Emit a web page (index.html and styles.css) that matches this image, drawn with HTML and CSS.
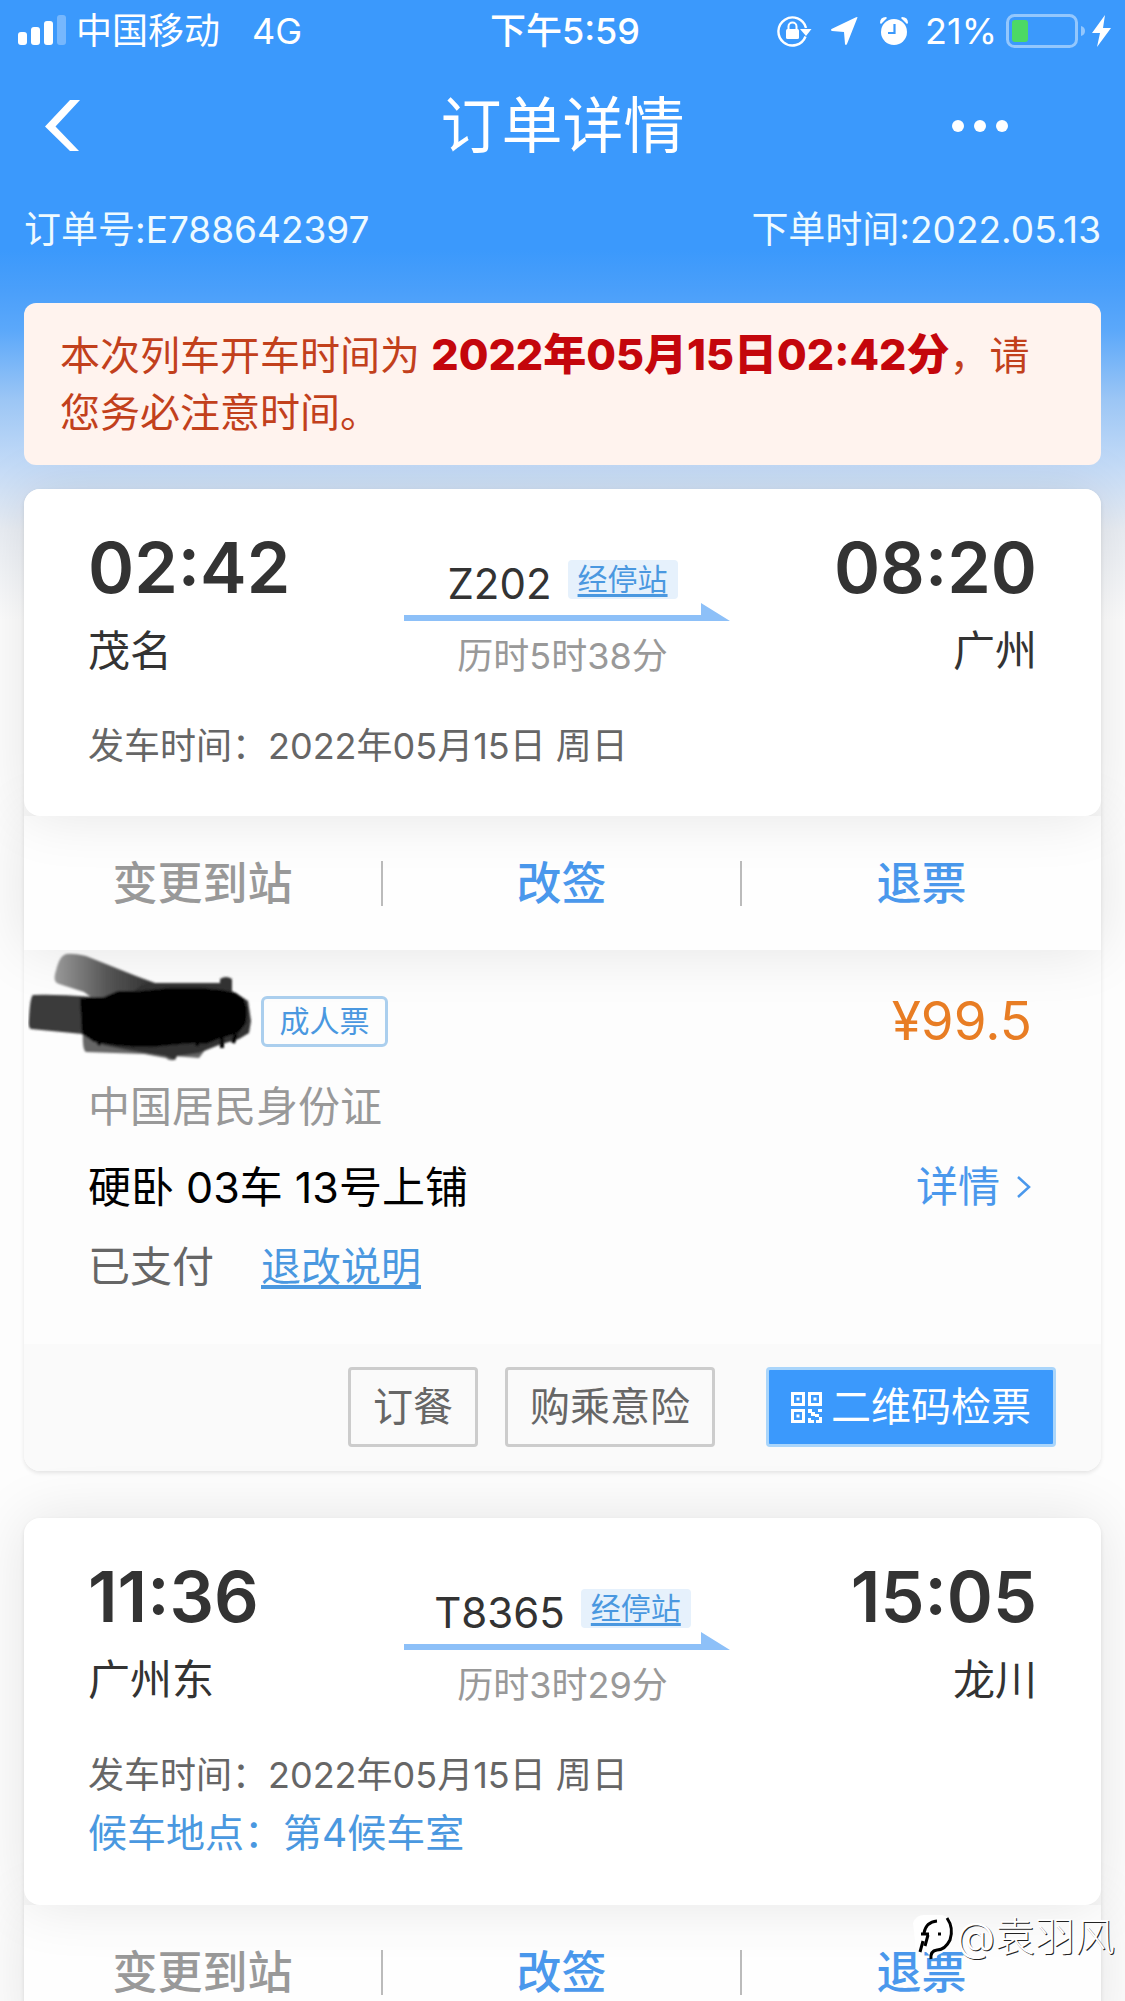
FILE: index.html
```html
<!DOCTYPE html>
<html lang="zh-CN">
<head>
<meta charset="utf-8">
<meta name="viewport" content="width=device-width, initial-scale=1">
<title>订单详情</title>
<link rel="stylesheet" href="styles.css">
</head>
<body>
<div class="app">
  <div class="status">
    <div class="status-side">
      <svg class="signal" width="50" height="34" viewBox="0 0 50 34" fill="#fff" aria-hidden="true"><rect x="0" y="18" width="9" height="13" rx="3"/><rect x="13" y="13" width="9" height="18" rx="3"/><rect x="26" y="7" width="9" height="24" rx="3"/><rect x="39" y="1" width="9" height="30" rx="3" opacity=".3"/></svg>
      <span class="carrier">中国移动</span>
      <span>4G</span>
    </div>
    <div class="status-time">下午5:59</div>
    <div class="status-side status-right">
      <svg width="35" height="32" viewBox="0 0 35 32" aria-hidden="true"><path d="M28.5 21.5A14 14 0 1 1 29 13" fill="none" stroke="#fff" stroke-width="2.4"/><path d="M23 14h11.500l-5.500 7z" fill="#fff"/><rect x="9" y="14" width="13" height="10" rx="1.500" fill="#fff"/><path d="M11.500 15v-3.500a4 4 0 0 1 8 0V15" fill="none" stroke="#fff" stroke-width="2"/></svg>
      <svg class="icon-location" width="29" height="30" viewBox="0 0 29 30" aria-hidden="true"><path d="M27.500 1.500 17 28q-1.200 2-2 0L14 16 2 15q-2-1 0-2.200L25.500 1.500q2-1 2 0z" fill="#fff"/></svg>
      <svg class="icon-alarm" width="30" height="30" viewBox="0 0 30 30" aria-hidden="true"><circle cx="15" cy="16" r="13" fill="#fff"/><path d="M15.500 8v9H9" fill="none" stroke="#3b99fc" stroke-width="2.200"/><path d="M1 7q0-6 6-6l1 1-6 6zM29 7q0-6-6-6l-1 1 6 6z" fill="#fff"/></svg>
      <span class="percent">21%</span>
      <svg class="icon-battery" width="80" height="36" viewBox="0 0 80 36" aria-hidden="true"><rect x="1.500" y="2.500" width="69" height="31" rx="7" fill="none" stroke="#fff" stroke-opacity=".45" stroke-width="3"/><path d="M75 13q4 1 4 5t-4 5z" fill="#fff" fill-opacity=".45"/><rect x="6" y="7" width="16" height="22" rx="3" fill="#4cd964"/></svg>
      <svg class="icon-bolt" width="20" height="32" viewBox="0 0 20 32" aria-hidden="true"><path d="M13 0 0 18h8L5 32 19 13h-8z" fill="#fff"/></svg>
    </div>
  </div>

  <header class="nav">
    <button class="nav-back" aria-label="返回"><svg width="36" height="52" viewBox="0 0 36 52"><path d="M25 0h10L10.500 26.500 34 51H25L0 26.500z" fill="#fff"/></svg></button>
    <h1 class="nav-title">订单详情</h1>
    <button class="nav-more" aria-label="更多"><svg width="58" height="14" viewBox="0 0 58 14" fill="#fff"><circle cx="7" cy="7" r="6"/><circle cx="29" cy="7" r="6"/><circle cx="51" cy="7" r="6"/></svg></button>
  </header>

  <div class="order-meta"><span>订单号:E788642397</span><span>下单时间:2022.05.13</span></div>

  <main class="content">
    <p class="alert">本次列车开车时间为 <strong>2022年05月15日02:42分</strong>，请您务必注意时间。</p>

    <article class="ticket">
      <section class="route">
        <div class="route-grid">
          <div><div class="time">02:42</div><div class="city">茂名</div></div>
          <div class="leg">
            <div class="leg-train"><span class="train-no">Z202</span><a class="stops" href="#stops">经停站</a></div>
            <svg class="leg-arrow" width="334" height="18" viewBox="0 0 334 18" aria-hidden="true"><path d="M8 12h297V0l29 18H8z" fill="#8dc0f8"/></svg>
            <div class="duration">历时5时38分</div>
          </div>
          <div class="arrive"><div class="time">08:20</div><div class="city">广州</div></div>
        </div>
        <div class="depart">发车时间：2022年05月15日 周日</div>
      </section>
      <div class="actions">
        <button class="action" disabled>变更到站</button>
        <button class="action">改签</button>
        <button class="action">退票</button>
      </div>
      <section class="passenger">
        <div class="row row-name">
          <div class="name">
            <svg class="scribble" width="226" height="110" viewBox="28 952 226 110" aria-hidden="true">
              <defs>
                <filter id="soft" x="-5%" y="-5%" width="110%" height="110%"><feGaussianBlur stdDeviation="1"/></filter>
                <linearGradient id="fade" x1="0" x2="1"><stop offset="0" stop-color="#999"/><stop offset=".45" stop-color="#555"/><stop offset="1" stop-color="#222"/></linearGradient>
              </defs>
              <g filter="url(#soft)">
                <path d="M64 955q4-3 22 1l50 20 38 14-10 25-60-8-20-15-25-8q-6-2-4-10 4-17 9-19z" fill="url(#fade)"/>
                <path d="M83 1030h130l-5 16-9 12-25-2 0 4q-5 1-8-2l-22-4-58-2q-4-2-3-22z" fill="#666"/>
                <path d="M135 990q8-8 20-7h65v-4q6-4 12 0v12l16 10 3 20-2 12-10 6-20 6-20 8-22 3-2 4-10-4-38-6-25-5z" fill="#333"/>
                <path d="M33 995q20-1 60 2v38l-62-6q-3-1-2-10 1-22 4-24z" fill="#3b3b3b"/>
                <path d="M80 998 104 997l14-6 22 0 30-3 30 0 22 2 14 3 8 6 3 10-1 14-8 10-20 6-12 5-10-1-14 1-30 3-32-1-26-4-12-8z" fill="#000"/>
                <path d="M92 1040q8-4 12-2l-6 7M125 1040l8 5 8-6M176 1036v9M199 1034l-2 12M222 1030v18M236 1034l-3 9" fill="none" stroke="#000" stroke-width="4"/>
              </g>
            </svg>
          </div>
          <span class="tag">成人票</span>
          <span class="price">¥99.5</span>
        </div>
        <div class="row id-type">中国居民身份证</div>
        <div class="row seat"><span>硬卧 03车 13号上铺</span><a class="detail" href="#detail">详情<svg width="16" height="22" viewBox="0 0 16 22" aria-hidden="true"><path d="m2 1 11 10L2 21" fill="none" stroke="#4a98ec" stroke-width="2.500"/></svg></a></div>
        <div class="row paid"><span>已支付</span><a class="rules" href="#rules">退改说明</a></div>
      </section>
      <footer class="ticket-foot">
        <button class="btn">订餐</button>
        <button class="btn">购乘意险</button>
        <button class="btn btn-primary"><svg width="31" height="31" viewBox="0 0 31 31" fill="#fff" aria-hidden="true"><path fill-rule="evenodd" d="M0 0h14v14H0zM3 3v8h8V3zM17 0h14v14H17zM20 3v8h8V3zM0 17h14v14H0zM3 20v8h8v-8z"/><path d="M5.500 5.500h3v3h-3zM22.500 5.500h3v3h-3zM5.500 22.500h3v3h-3zM17 17h4v3h3v4h-4v-3h-3zM27 17h4v3h-4zM24 22h4v3h3v6h-6v-3h3v-3h-4zM17 26h3v2h3v3h-6z"/></svg>二维码检票</button>
      </footer>
    </article>

    <article class="ticket">
      <section class="route">
        <div class="route-grid">
          <div><div class="time">11:36</div><div class="city">广州东</div></div>
          <div class="leg">
            <div class="leg-train"><span class="train-no">T8365</span><a class="stops" href="#stops">经停站</a></div>
            <svg class="leg-arrow" width="334" height="18" viewBox="0 0 334 18" aria-hidden="true"><path d="M8 12h297V0l29 18H8z" fill="#8dc0f8"/></svg>
            <div class="duration">历时3时29分</div>
          </div>
          <div class="arrive"><div class="time">15:05</div><div class="city">龙川</div></div>
        </div>
        <div class="depart">发车时间：2022年05月15日 周日</div>
        <div class="waiting">候车地点：第4候车室</div>
      </section>
      <div class="actions">
        <button class="action" disabled>变更到站</button>
        <button class="action">改签</button>
        <button class="action">退票</button>
      </div>
    </article>
  </main>

  <div class="watermark">
    <svg width="44" height="48" viewBox="0 0 44 48" aria-hidden="true"><path d="M1 10Q4 1 14 2h16q11 2 12 14-1 20-16 26-4 6-8 2-4-8-12-8-4 0-3-8z" fill="#fff"/><path d="M8 39 11 28M9 21h8M12 20q2-11 13-12M16 22l-3 11M26 21h3M35 5q7 10 3 22-5 10-13 10-7 1-6 9" fill="none" stroke="#000" stroke-width="3"/></svg><span>@袁羽风</span>
  </div>
</div>
</body>
</html>
```
FILE: styles.css
```css
* { box-sizing: border-box; }

body {
  margin: 0;
  background: #fdfdfd;
  color: #333;
  font-family: Inter, "Noto Sans CJK SC", sans-serif;
  font-weight: 400;
}

button { margin: 0; padding: 0; border: 0; background: none; font: inherit; color: inherit; }
h1, p { margin: 0; font-weight: inherit; }
svg { display: block; flex: none; }

.app {
  position: relative;
  height: 100vh;
  overflow: hidden;
  background: linear-gradient(#3b99fc 0, #3b99fc 250px, #4a9ffa 290px, #5ba8fa 330px, #9cc6f5 400px, #c6dcf7 470px, #eaeef4 530px, #fdfdfd 620px);
}

/* status bar */
.status {
  display: grid;
  grid-template-columns: 1fr auto 1fr;
  align-items: center;
  height: 62px;
  padding: 0 13px 0 18px;
  color: #fff;
  font-size: 36px;
  line-height: 62px;
}
.status-side { display: flex; align-items: center; }
.status-right { justify-content: flex-end; }
.status-time { font-weight: 500; }
.carrier { margin: 0 32px 0 8px; }
.icon-location { margin-left: 18px; }
.icon-alarm { margin-left: 20px; }
.percent { margin: 0 9px 0 16px; }
.icon-bolt { margin-left: 6px; }

/* title bar */
.nav {
  display: grid;
  grid-template-columns: 1fr auto 1fr;
  align-items: center;
  height: 128px;
  padding: 0 45px;
  color: #fff;
}
.nav-title { font-size: 61px; line-height: 80px; }
.nav-back { justify-self: start; }
.nav-more { justify-self: end; margin-right: 71px; }

.order-meta {
  display: flex;
  justify-content: space-between;
  padding: 0 24px;
  color: #eefaff;
  font-size: 37px;
  line-height: 80px;
}

.content { padding: 33px 24px 0; }

.alert {
  position: relative;
  z-index: 3;
  margin-bottom: 24px;
  padding: 24px 56px 24px 36px;
  border-radius: 12px;
  background: #fff3ee;
  color: #c2401c;
  font-size: 40px;
  line-height: 57px;
}
.alert strong { color: #c4060c; font-size: 43px; font-weight: 800; line-height: 1; }

/* ticket */
.ticket {
  margin-bottom: 47px;
  border-radius: 16px;
  background: #fdfdfd;
  box-shadow: 0 2px 4px rgba(0, 0, 0, .1);
}
.route {
  position: relative;
  z-index: 2;
  padding: 37px 64px 41px;
  border-radius: 16px;
  background: #fff;
  box-shadow: 0 0 60px rgba(0, 0, 0, .1);
}
.route-grid { display: grid; grid-template-columns: 1fr auto 1fr; }
.time { color: #333; font-size: 70px; font-weight: 600; line-height: 84px; }
.city { color: #333; font-size: 42px; line-height: 82px; }
.arrive { text-align: right; }
.leg { padding-top: 34px; text-align: center; }
.leg-train { display: flex; justify-content: center; gap: 16px; height: 43px; }
.train-no { padding-top: 5px; font-size: 42px; line-height: 38px; }
.stops {
  height: 39px;
  padding: 0 10px;
  border-radius: 4px;
  background: #e6f1fc;
  color: #4a98e0;
  font-size: 30px;
  line-height: 39px;
  text-underline-offset: 4px;
}
.duration { color: #999; font-size: 36px; line-height: 70px; }
.depart { margin-top: 26px; color: #666; font-size: 36px; line-height: 57px; }
.waiting { margin-bottom: 3px; color: #4a98e0; font-size: 39px; line-height: 57px; }

.actions {
  position: relative;
  z-index: 1;
  display: grid;
  grid-template-columns: repeat(3, 1fr);
  align-items: center;
  height: 134px;
  background: #fefefe;
  box-shadow: 0 0 60px rgba(0, 0, 0, .1);
}
.action {
  height: 45px;
  border-right: 2px solid #bbb;
  color: #4a98ec;
  font-size: 45px;
  font-weight: 500;
  line-height: 45px;
}
.action:last-child { border-right: 0; }
.action:disabled { color: #999; }

/* passenger */
.passenger { position: relative; z-index: 1; padding: 25px 69px 37px 64px; }
.row { display: flex; align-items: center; font-size: 42px; line-height: 80px; }
.row-name { height: 92px; }
.name { position: relative; width: 163px; height: 60px; margin-right: 10px; }
.scribble { position: absolute; left: -60px; top: -39px; }
.tag {
  width: 127px;
  border: 3px solid #abcfee;
  border-radius: 6px;
  color: #4a98e0;
  font-size: 30px;
  line-height: 45px;
  text-align: center;
}
.price { margin-left: auto; color: #e87d24; font-size: 53px; }
.id-type { color: #999; }
.seat { justify-content: space-between; color: #000; font-size: 43px; }
.detail { display: flex; align-items: center; gap: 16px; color: #4a98ec; font-size: 42px; text-decoration: none; }
.paid { gap: 47px; color: #666; }
.rules { color: #4a98e0; font-size: 40px; text-underline-offset: 4px; }

.ticket-foot {
  display: flex;
  justify-content: flex-end;
  gap: 27px;
  padding: 23px 45px 24px;
  border-radius: 0 0 16px 16px;
  background: #fafafa;
}
.btn {
  height: 80px;
  padding: 0 22px;
  border: 3px solid #ccc;
  border-radius: 4px;
  color: #666;
  font-size: 40px;
  line-height: 74px;
}
.btn-primary {
  display: flex;
  align-items: center;
  gap: 9px;
  margin-left: 24px;
  border-color: #a9d5fb;
  background: #3b99fc;
  color: #fff;
}

.watermark {
  position: absolute;
  right: 10px;
  bottom: 34px;
  z-index: 3;
  display: flex;
  align-items: center;
  color: #fff;
  font-size: 40px;
  font-weight: 300;
  line-height: 60px;
  text-shadow: 1px 1px 0 #222;
}
```
